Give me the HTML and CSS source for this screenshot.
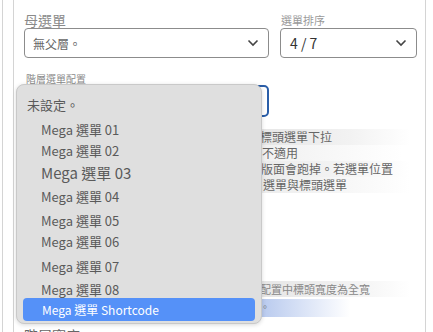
FILE: index.html
```html
<!DOCTYPE html>
<html lang="zh-Hant">
<head>
    <meta charset="UTF-8">
    <meta name="viewport" content="width=device-width, initial-scale=1.0">
    <title>選單設定</title>
    <link rel="stylesheet" href="styles.css">
</head>
<body>
    <div class="page">
        <div class="frame">
            <div class="panel">
                <div class="row">
                    <div class="field parent-field">
                        <label class="label">母選單</label>
                        <div class="select">
                            <span class="value">無父層。</span>
                            <svg class="chevron" width="12" height="8" viewBox="0 0 12 8"><path d="M1.5 1.5 L6 6 L10.5 1.5" fill="none" stroke="#444" stroke-width="1.6"/></svg>
                        </div>
                    </div>
                    <div class="field order-field">
                        <label class="label small">選單排序</label>
                        <div class="select">
                            <span class="value dark">4 / 7</span>
                            <svg class="chevron" width="12" height="8" viewBox="0 0 12 8"><path d="M1.5 1.5 L6 6 L10.5 1.5" fill="none" stroke="#444" stroke-width="1.6"/></svg>
                        </div>
                    </div>
                </div>

                <div class="field layout-field">
                    <label class="label tiny">階層選單配置</label>
                    <div class="select focused"></div>
                    <div class="notes">
                        <div class="note n1">標頭選單下拉</div>
                        <div class="note n2">不適用</div>
                        <div class="note n3">版面會跑掉。若選單位置</div>
                        <div class="note n4">選單與標頭選單</div>
                        <div class="note n5">配置中標頭寬度為全寬</div>
                        <div class="note n6">。</div>
                    </div>
                    <label class="label next">階層寬度</label>
                </div>
            </div>
        </div>

        <ul class="menu">
            <li class="opt top">未設定。</li>
            <li class="opt i1">Mega 選單 01</li>
            <li class="opt i2">Mega 選單 02</li>
            <li class="opt i3 big">Mega 選單 03</li>
            <li class="opt i4">Mega 選單 04</li>
            <li class="opt i5">Mega 選單 05</li>
            <li class="opt i6">Mega 選單 06</li>
            <li class="opt i7">Mega 選單 07</li>
            <li class="opt i8">Mega 選單 08</li>
            <li class="opt active">Mega 選單 Shortcode</li>
        </ul>
    </div>
</body>
</html>
```

FILE: styles.css
```css
body {
    margin: 0;
    background: #fff;
    font-family: "Noto Sans CJK TC", "Noto Sans", sans-serif;
    color: #555;
}
.page {
    position: relative;
    height: 332px;
    overflow: hidden;
    padding-left: 2px;
}
.frame {
    border-left: 1px solid #d4d4d4;
    padding-left: 10px;
    height: 100%;
}
.panel {
    border-left: 1px solid #d4d4d4;
    border-right: 1px solid #d4d4d4;
    width: 413px;
    height: 100%;
    box-sizing: border-box;
    padding: 13px 0 0 10px;
}
.row {
    display: flex;
    align-items: flex-end;
    gap: 11px;
}
.field {
    display: flex;
    flex-direction: column;
}
.parent-field {
    width: 245px;
}
.order-field {
    width: 137px;
}
.label {
    display: block;
    font-size: 14px;
    line-height: 15px;
    color: #8a8a8a;
}
.label.small {
    font-size: 11px;
    line-height: 15px;
    color: #9a9a9a;
    margin-left: 1px;
}
.label.tiny {
    font-size: 10px;
    line-height: 13px;
    color: #8a8a8a;
    margin-left: 2px;
}
.select {
    height: 30px;
    box-sizing: border-box;
    border: 1px solid #8c8c8c;
    border-radius: 4px;
    display: flex;
    align-items: center;
    justify-content: space-between;
    padding: 0 8px;
    background: #fff;
}
.value {
    font-size: 12px;
    color: #666;
}
.value.dark {
    font-size: 14px;
    color: #333;
    margin-left: 1px;
}
.chevron {
    margin-right: 1px;
}
.layout-field {
    margin-top: 14px;
    width: 245px;
}
.select.focused {
    height: 32px;
    border: 2px solid #2a5ea8;
    border-radius: 5px;
}
.notes {
    margin-top: 12px;
    margin-left: 236px;
    width: 150px;
}
.note {
    font-size: 12px;
    line-height: 16px;
    color: #666;
    white-space: nowrap;
    background: linear-gradient(to right, #e6e6e6, #f2f2f2 60%, rgba(255,255,255,0));
}
.note.n2 {
    width: 140px;
    padding-left: 2px;
    background: linear-gradient(to right, #f0f0f0, rgba(255,255,255,0));
}
.note.n3 {
    padding-left: 1px;
    background: linear-gradient(to right, #ececec, #f4f4f4 60%, rgba(255,255,255,0));
}
.note.n4 {
    padding-left: 3px;
    background: linear-gradient(to right, #ececec, rgba(255,255,255,0));
}
.note.n5 {
    margin-top: 88px;
    font-size: 11px;
    color: #888;
    width: 150px;
}
.note.n6 {
    margin-top: 2px;
    width: 90px;
    height: 18px;
    font-size: 10px;
    color: #777;
    background: linear-gradient(to right, #b7c9ee, rgba(255,255,255,0));
}
.label.next {
    margin-top: 11px;
    font-size: 14px;
    color: #666;
}
.menu {
    position: absolute;
    top: 84px;
    left: 16px;
    width: 246px;
    height: 240px;
    box-sizing: border-box;
    margin: 0;
    padding: 8px 6px 0 6px;
    list-style: none;
    background: #dfdfdf;
    border: 1px solid #c9c9c9;
    border-radius: 8px;
    box-shadow: 0 1px 4px rgba(0,0,0,0.15);
}
.opt {
    height: 23px;
    line-height: 23px;
    font-size: 13px;
    color: #5a5a5a;
    padding-left: 18px;
    white-space: nowrap;
}
.opt.top {
    padding-left: 4px;
    margin-bottom: 2px;
}
.opt.i2 {
    margin-top: -2px;
}
.opt.big {
    font-size: 15px;
    margin-top: -1px;
}
.opt.i4 {
    margin-top: 1px;
}
.opt.i5 {
    margin-top: 1px;
}
.opt.i6 {
    margin-top: -2px;
}
.opt.i7 {
    margin-top: 2px;
}
.opt.active {
    margin-top: -3px;
    background: #5591f8;
    color: #fff;
    border-radius: 4px;
    font-size: 12px;
    padding-left: 19px;
}
```
